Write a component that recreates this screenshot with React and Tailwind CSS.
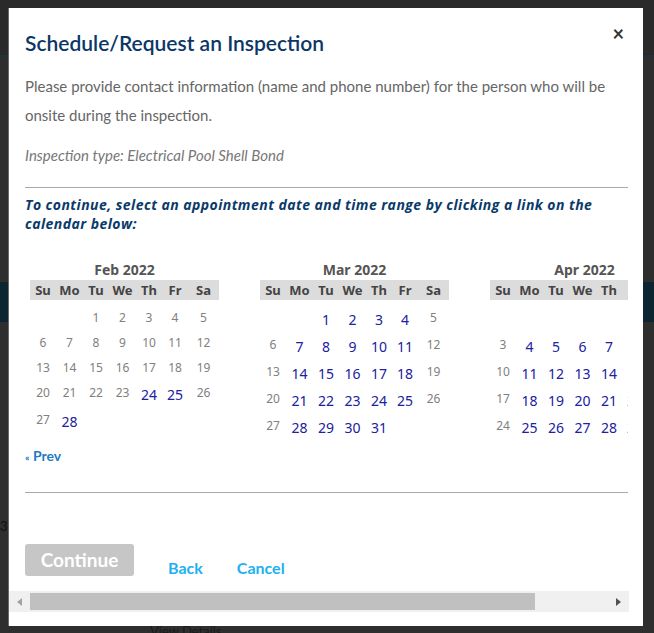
import React from 'react';

const months = [
  { name: 'Feb 2022', start: 2, days: 28, open: [24, 25, 28] },
  { name: 'Mar 2022', start: 2, days: 31, open: [1, 2, 3, 4, 7, 8, 9, 10, 11, 14, 15, 16, 17, 18, 21, 22, 23, 24, 25, 28, 29, 30, 31] },
  { name: 'Apr 2022', start: 5, days: 30, open: [1, 4, 5, 6, 7, 8, 11, 12, 13, 14, 15, 18, 19, 20, 21, 22, 25, 26, 27, 28, 29] },
];

const dayNames = ['Su', 'Mo', 'Tu', 'We', 'Th', 'Fr', 'Sa'];

const Month = ({ month }) => {
  const cells = [];
  for (let i = 0; i < month.start; i++) cells.push(null);
  for (let d = 1; d <= month.days; d++) cells.push(d);

  return (
    <div className="w-[189px] shrink-0">
      <div className="text-center text-[14px] font-bold leading-[20px] text-[#555]">{month.name}</div>
      <div className="grid grid-cols-[26px_27px_26px_27px_26px_26px_31px] bg-[#dcdcdc] text-[13px] font-bold leading-[20px] text-[#444]">
        {dayNames.map((d) => (
          <div key={d} className="text-center">{d}</div>
        ))}
      </div>
      <div className="mt-[5px] grid grid-cols-[26px_27px_26px_27px_26px_26px_31px] items-start">
        {cells.map((d, i) =>
          d === null ? (
            <div key={i} className="h-[25px]" />
          ) : month.open.includes(d) ? (
            <a key={i} href="#" className="block pt-[2px] text-center text-[14px] leading-[25px] text-[#2020a0]">
              {d}
            </a>
          ) : (
            <div key={i} className="text-center text-[12px] leading-[25px] text-[#808080]">{d}</div>
          )
        )}
      </div>
    </div>
  );
};

const App = () => {
  return (
    <div className="relative h-[633px] w-[654px] overflow-hidden bg-[#2e2e2e] font-['Lato',sans-serif]">
      {/* page behind the overlay */}
      <div className="h-[55px] border-b border-[#0e3040] bg-[#2a2a2a]" />
      <div className="mt-[227px] h-[40px] bg-[#0b2630]" />
      <div className="mt-[195px] text-[13px] text-[#111]">3</div>
      <div className="mt-[85px] pl-[150px] text-[13px] text-[#1a1a1a]">View Details</div>

      {/* Modal */}
      <div className="absolute left-[8px] top-[8px] flex h-[618px] w-[635px] flex-col border-l border-[#6a6a6a] bg-white">
        <div className="h-[583px] w-[620px] overflow-hidden pl-[16px] pt-[14px]">
          <div className="w-[603px]">
            <div className="flex items-start justify-between">
              <h2 className="mt-[7px] text-[21px] font-semibold leading-[28px] text-[#0b3768]">
                Schedule/Request an Inspection
              </h2>
              <button className="mr-[4px] text-[20px] font-bold leading-[22px] text-[#333]">×</button>
            </div>

            <p className="mt-[15px] text-[15px] leading-[29px] text-[#666]">
              Please provide contact information (name and phone number) for the person who will be onsite during the inspection.
            </p>
            <p className="mt-[11px] text-[15px] italic leading-[29px] text-[#777]">
              Inspection type: Electrical Pool Shell Bond
            </p>

            <hr className="mt-[17px] border-t border-[#aaa]" />

            <p className="mt-[7px] font-['Open_Sans',sans-serif] text-[14px] font-bold italic leading-[19px] tracking-[0.45px] text-[#0a3a6a]">
              To continue, select an appointment date and time range by clicking a link on the calendar below:
            </p>

            <div className="mt-[27px] flex w-[603px] gap-[41px] overflow-hidden pl-[5px] font-['Noto_Sans',sans-serif]">
              {months.map((m) => (
                <Month key={m.name} month={m} />
              ))}
            </div>

            <a href="#" className="mt-[6px] block text-[14px] font-bold leading-[20px] text-[#1f7ac4]">
              <span className="text-[10px]">«</span> Prev
            </a>

            <hr className="mt-[25px] border-t border-[#aaa]" />

            <div className="mt-[51px] flex items-start">
              <button className="h-[32px] w-[109px] rounded-[3px] bg-[#c6c6c6] text-[19px] font-bold text-white">
                Continue
              </button>
              <a href="#" className="ml-[34px] mt-[14px] text-[16px] font-bold leading-[20px] text-[#22b0f0]">Back</a>
              <a href="#" className="ml-[34px] mt-[14px] text-[16px] font-bold leading-[20px] text-[#22b0f0]">Cancel</a>
            </div>
          </div>
        </div>

        {/* horizontal scrollbar */}
        <div className="flex h-[21px] w-[620px] items-center bg-[#f0f0f0]">
          <div className="flex w-[21px] justify-center">
            <svg width="5" height="8" viewBox="0 0 5 8"><path d="M5 0 L0 4 L5 8 Z" fill="#a3a3a3" /></svg>
          </div>
          <div className="h-[17px] w-[505px] bg-[#c0c0c0]" />
          <div className="flex-1" />
          <div className="flex w-[21px] justify-center">
            <svg width="5" height="8" viewBox="0 0 5 8"><path d="M0 0 L5 4 L0 8 Z" fill="#505050" /></svg>
          </div>
        </div>
      </div>
    </div>
  );
};

export default App;
